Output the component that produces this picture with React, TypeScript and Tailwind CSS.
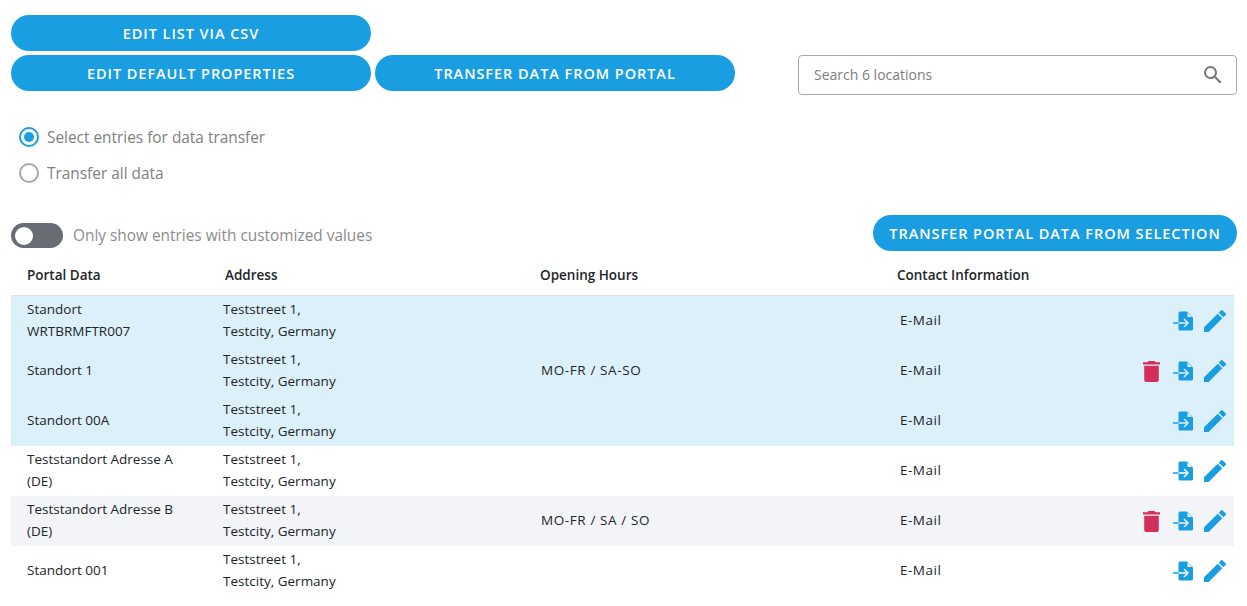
const rows = [
  { name: ["Standort", "WRTBRMFTR007"], hours: "", del: false, bg: "bg-[#dcf0fa]" },
  { name: ["Standort 1"], hours: "MO-FR / SA-SO", del: true, bg: "bg-[#dcf0fa]" },
  { name: ["Standort 00A"], hours: "", del: false, bg: "bg-[#dcf0fa]" },
  { name: ["Teststandort Adresse A", "(DE)"], hours: "", del: false, bg: "bg-white" },
  { name: ["Teststandort Adresse B", "(DE)"], hours: "MO-FR / SA / SO", del: true, bg: "bg-[#f3f4f8]" },
  { name: ["Standort 001"], hours: "", del: false, bg: "bg-white" },
];

function PillButton({ label, className }: { label: string; className: string }) {
  return (
    <button className={`h-9 shrink-0 rounded-full bg-[#1a9ee2] pt-[1px] text-[14.5px] font-semibold tracking-[0.95px] text-white ${className}`}>
      {label}
    </button>
  );
}

function TrashIcon() {
  return (
    <svg width="17" height="21" viewBox="5 3 14 18" preserveAspectRatio="none" fill="#d32f5b">
      <path d="M6 19c0 1.100.9 2 2 2h8c1.100 0 2-.9 2-2V7H6v12zM19 4h-3.500l-1-1h-5l-1 1H5v2h14V4z" />
    </svg>
  );
}

function TransferIcon({ bg }: { bg: string }) {
  return (
    <svg width="20" height="20" viewBox="0 0 20 20">
      <path fill="#1a9ee2" d="M7 0.500h7l6 6V18a1.500 1.500 0 0 1-1.500 1.500H7A1.500 1.500 0 0 1 5.500 18V2A1.500 1.500 0 0 1 7 0.500z" />
      <path fill={bg} d="M14.500 1.500 19 6h-4.500z" />
      <path stroke="#1a9ee2" strokeWidth="1.500" fill="none" d="M0 12h6" />
      <path stroke={bg} strokeWidth="1.500" fill="none" d="M5.500 12H15M11 8l4 4-4 4" />
    </svg>
  );
}

function PencilIcon() {
  return (
    <svg width="22" height="22" viewBox="1.500 1 22.500 22.500" fill="#1a9ee2">
      <path d="M1.500 23.500v-4.750L15.500 4.750l4.750 4.750-14 14H1.500zM21.300 8.450l-4.750-4.750 2.300-2.300a1.200 1.200 0 0 1 1.700 0l3.050 3.050a1.200 1.200 0 0 1 0 1.700l-2.300 2.300z" />
    </svg>
  );
}

export default function App() {
  return (
    <div className="h-[606px] overflow-hidden bg-white pl-[11px] pr-[10px] pt-[15px] font-['Open_Sans',sans-serif] text-[13.5px] text-[#212529]">
      <div className="flex flex-col gap-1">
        <PillButton label="EDIT LIST VIA CSV" className="w-[360px]" />
        <div className="flex items-start gap-1">
          <PillButton label="EDIT DEFAULT PROPERTIES" className="w-[360px]" />
          <PillButton label="TRANSFER DATA FROM PORTAL" className="w-[360px]" />
          <div className="ml-[59px] flex h-10 w-[439px] shrink-0 items-center justify-between rounded border border-[#a9a9a9] pl-[15px] pr-[11px]">
            <span className="mb-[2px] text-[14px] text-[#7d7d7d]">Search 6 locations</span>
            <svg width="24" height="24" viewBox="0 0 24 24" fill="#757575">
              <path d="M15.500 14h-.79l-.28-.27A6.470 6.470 0 0 0 16 9.500 6.500 6.500 0 1 0 9.500 16c1.610 0 3.090-.59 4.230-1.570l.27.28v.79l5 4.990L20.490 19l-4.990-5zm-6 0C7.010 14 5 11.990 5 9.500S7.010 5 9.500 5 14 7.010 14 9.500 11.990 14 9.500 14z" />
            </svg>
          </div>
        </div>
      </div>

      <div className="mt-[32px] flex flex-col gap-4 pl-2">
        <label className="flex h-5 items-center gap-[8px] text-[15.4px] text-[#808080]">
          <span className="flex h-5 w-5 items-center justify-center rounded-full border-2 border-[#1a9ee2]">
            <span className="h-[10px] w-[10px] rounded-full bg-[#1a9ee2]" />
          </span>
          <span className="mt-[2px]">Select entries for data transfer</span>
        </label>
        <label className="flex h-5 items-center gap-[8px] text-[15.4px] text-[#808080]">
          <span className="h-5 w-5 rounded-full border-2 border-[#a8a8a8]" />
          <span className="mt-[2px]">Transfer all data</span>
        </label>
      </div>

      <div className="mt-[32px] flex items-start justify-between">
        <div className="mt-2 flex items-center gap-[10px]">
          <span className="flex h-[25px] w-[52px] items-center rounded-full bg-[#696c75] pl-1">
            <span className="h-[18px] w-[18px] rounded-full bg-white" />
          </span>
          <span className="text-[15.4px] text-[#8c8c8c]">Only show entries with customized values</span>
        </div>
        <PillButton label="TRANSFER PORTAL DATA FROM SELECTION" className="w-[364px]" />
      </div>

      <div className="mt-[9px] w-[1223px]">
        <div className="flex h-[36px] items-center border-b border-[#dee2e6] pb-[4px] font-semibold">
          <div className="w-[214px] pl-4">Portal Data</div>
          <div className="w-[315px]">Address</div>
          <div className="w-[357px]">Opening Hours</div>
          <div>Contact Information</div>
        </div>
        {rows.map((r, i) => (
          <div key={i} className={`flex h-[50px] items-center leading-[22px] ${r.bg}`}>
            <div className="mb-[2px] w-[212px] pl-4">
              {r.name.map((n) => (
                <div key={n}>{n}</div>
              ))}
            </div>
            <div className="mb-[2px] w-[318px]">
              <div>Teststreet 1,</div>
              <div>Testcity, Germany</div>
            </div>
            <div className="mb-[2px] w-[359px] tracking-[0.6px]">{r.hours}</div>
            <div className="mb-[2px] w-[200px] tracking-[0.5px]">E-Mail</div>
            <div className="flex flex-1 items-center justify-end pr-[8px]">
              {r.del && (
                <div className="mr-[13px]">
                  <TrashIcon />
                </div>
              )}
              <div className="mr-[11px]">
                <TransferIcon bg={i < 3 ? "#dcf0fa" : i === 4 ? "#f3f4f8" : "#ffffff"} />
              </div>
              <PencilIcon />
            </div>
          </div>
        ))}
      </div>
    </div>
  );
}
